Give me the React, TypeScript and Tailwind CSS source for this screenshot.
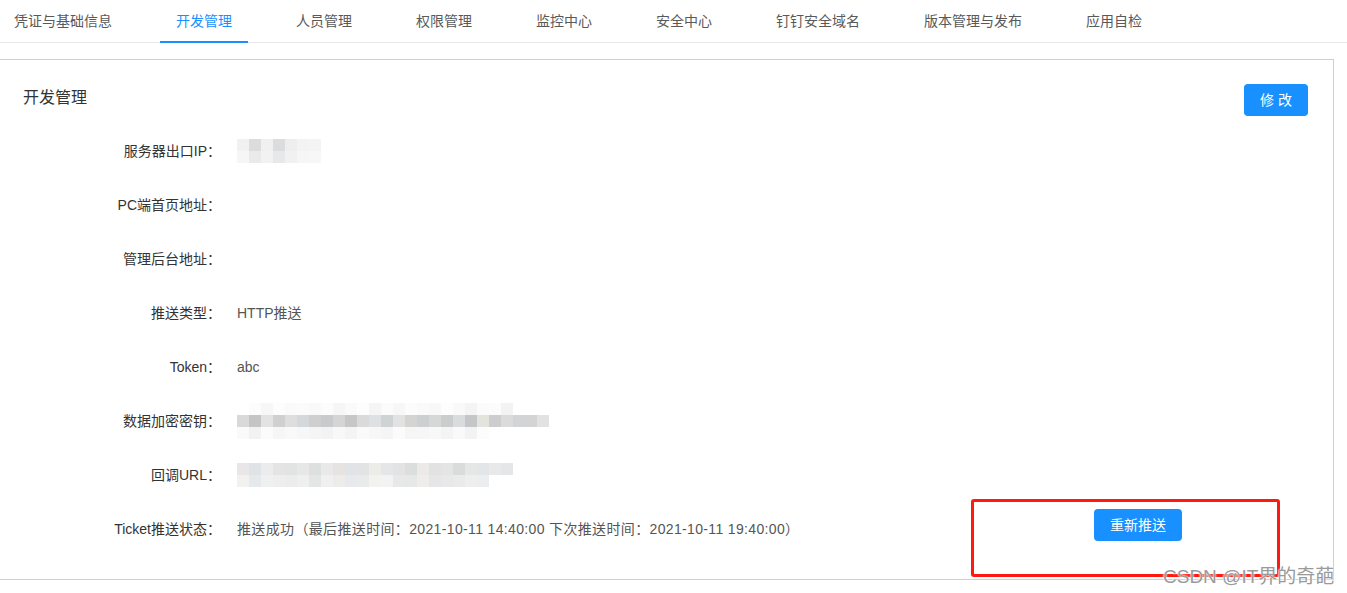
import React from 'react';

const tabs = ['凭证与基础信息', '开发管理', '人员管理', '权限管理', '监控中心', '安全中心', '钉钉安全域名', '版本管理与发布', '应用自检'];

// grey tones for the pixelated (blurred) values
const ipCells = [
  ['#f1f1f1', '#dcdcdc', '#f0f0f0', '#dadcdd', '#eeeeee', '#f3f3f3', '#f4f4f4'],
  ['#f6f6f6', '#eaeaea', '#f2f2f2', '#e8e8e8', '#f1f1f1', '#f6f6f6', '#f7f7f7'],
];
const keyCells = [
  ['#ffffff', '#fcfcfc', '#f7f7f7', '#fdfdfd', '#fafafa', '#fbfbfb', '#f9f9f9', '#fcfcfc', '#f6f6f6', '#fafafa', '#fdfdfd', '#f5f5f5', '#fbfbfb', '#f7f7f7', '#fcfcfc', '#fafafa', '#f8f8f8', '#fdfdfd', '#f9f9f9', '#f4f4f4', '#fbfbfb', '#fcfcfc', '#f3f3f3', '#ffffff', '#ffffff', '#ffffff'],
  ['#d9d9d9', '#c4c6c6', '#e3e3e3', '#d0d0d0', '#dedede', '#d3d9db', '#cfcfcf', '#c8cacb', '#d5d5d5', '#c6c8c8', '#dadada', '#dde1e4', '#d0d3d4', '#e2e2e2', '#d4d5d2', '#cdd0d0', '#d6d8d8', '#cbcccd', '#d9dcdd', '#c5c6c7', '#e4e4df', '#cbcdce', '#dbdbdb', '#d2d4d5', '#d4d4d4', '#e2e2e2'],
  ['#fafafa', '#f2f2f2', '#fbfbfb', '#f6f6f6', '#f9f9f9', '#f7f7f7', '#f5f5f5', '#f3f3f3', '#f8f8f8', '#f4f4f4', '#fafafa', '#f7f7f7', '#f5f5f5', '#fbfbfb', '#f6f6f6', '#f6f6f6', '#f8f8f8', '#f4f4f4', '#f9f9f9', '#f3f3f3', '#fcfcfc', '#ffffff', '#ffffff', '#ffffff', '#ffffff', '#ffffff'],
];
const urlCells = [
  ['#e8e6e6', '#dfe3e6', '#ebeced', '#e4e4e4', '#e2e4e4', '#e7e7e7', '#dedfdf', '#e9e9e9', '#e6e3e2', '#e1e4e7', '#e1e3e5', '#ecece9', '#e5e6e7', '#e3e3e3', '#dcdddd', '#ebeae8', '#e2e2e2', '#e4e4e4', '#dadcdc', '#e6e6e6', '#e3e6e8', '#e9e9e9', '#e4e6e7'],
  ['#f1f1ee', '#e6e9ec', '#eff0f0', '#eeeeee', '#ececec', '#efefef', '#e4e5e5', '#f0f0f0', '#ececeb', '#e7e9ec', '#e9eaea', '#f2f2ef', '#f3f3f3', '#e8e8e8', '#e6e7e7', '#efedeb', '#e6e6e9', '#e7e8e8', '#eaeaea', '#eeeeee', '#ebedee', '#ffffff', '#ffffff'],
];

function Mosaic({ cells, size = 12 }: { cells: string[][]; size?: number }) {
  return (
    <div className="flex flex-col">
      {cells.map((row, r) => (
        <div key={r} className="flex">
          {row.map((c, i) => (
            <div key={i} style={{ width: size, height: size, background: c }} />
          ))}
        </div>
      ))}
    </div>
  );
}

const rows: { label: string; value: React.ReactNode }[] = [
  { label: '服务器出口IP', value: <Mosaic cells={ipCells} /> },
  { label: 'PC端首页地址', value: null },
  { label: '管理后台地址', value: null },
  { label: '推送类型', value: 'HTTP推送' },
  { label: 'Token', value: 'abc' },
  { label: '数据加密密钥', value: <Mosaic cells={keyCells} size={12} /> },
  { label: '回调URL', value: <Mosaic cells={urlCells} /> },
];

export default function App() {
  return (
    <div
      className="relative w-[1347px] h-[593px] overflow-hidden bg-white text-[14px] text-[#333]"
      style={{ fontFamily: '"Liberation Sans", "Noto Sans CJK SC", sans-serif' }}
    >
      {/* Tabs */}
      <div className="flex h-[43px] border-b border-[#e8e8e8] ml-[-2px]">
        {tabs.map((t, i) => (
          <div
            key={t}
            className={`relative flex items-center px-4 mr-8 h-full ${i === 1 ? 'text-[#1890ff]' : 'text-[#595959]'}`}
          >
            {t}
            {i === 1 && <div className="absolute left-0 right-0 bottom-[-1px] h-[2px] bg-[#1890ff]" />}
          </div>
        ))}
      </div>

      {/* Card */}
      <div className="mt-[16px] w-[1334px] h-[521px] border border-l-0 border-[#cfcfcf] flex flex-col">
        <div className="flex items-start justify-between pl-[23px] pr-[25px] pt-[24px]">
          <div className="text-[16px] text-[#333] mt-[2px]">开发管理</div>
          <button className="w-[64px] h-[32px] rounded bg-[#1890ff] text-white text-[14px] tracking-[4px] pl-[4px]">
            修改
          </button>
        </div>

        <div className="flex flex-col mt-[8px]">
          {rows.map((r) => (
            <div key={r.label} className="flex items-center h-[54px]">
              <div className="w-[221px] text-right text-[#333] shrink-0">{r.label}：</div>
              <div className="pl-[16px] text-[#555] flex items-center">{r.value}</div>
            </div>
          ))}
          <div className="flex items-center h-[54px]">
            <div className="w-[221px] text-right text-[#333] shrink-0">Ticket推送状态：</div>
            <div className="pl-[16px] text-[#555] tracking-[0.35px]">
              推送成功（最后推送时间：2021-10-11 14:40:00 下次推送时间：2021-10-11 19:40:00）
            </div>
            <button className="ml-auto mr-[151px] mb-[8px] w-[88px] h-[32px] rounded bg-[#1890ff] text-white text-[14px]">
              重新推送
            </button>
          </div>
        </div>
      </div>

      {/* annotation box */}
      <div className="absolute left-[971px] top-[499px] w-[309px] h-[78px] border-[3px] border-[#ff1a10] rounded-[3px]" />

      {/* watermark */}
      <div
        className="absolute left-[1163px] top-[563px] text-[19px] text-[#9a9a9a]"
        style={{ textShadow: '0 0 2px #fff, 0 0 2px #fff' }}
      >
        CSDN @IT界的奇葩
      </div>
    </div>
  );
}
